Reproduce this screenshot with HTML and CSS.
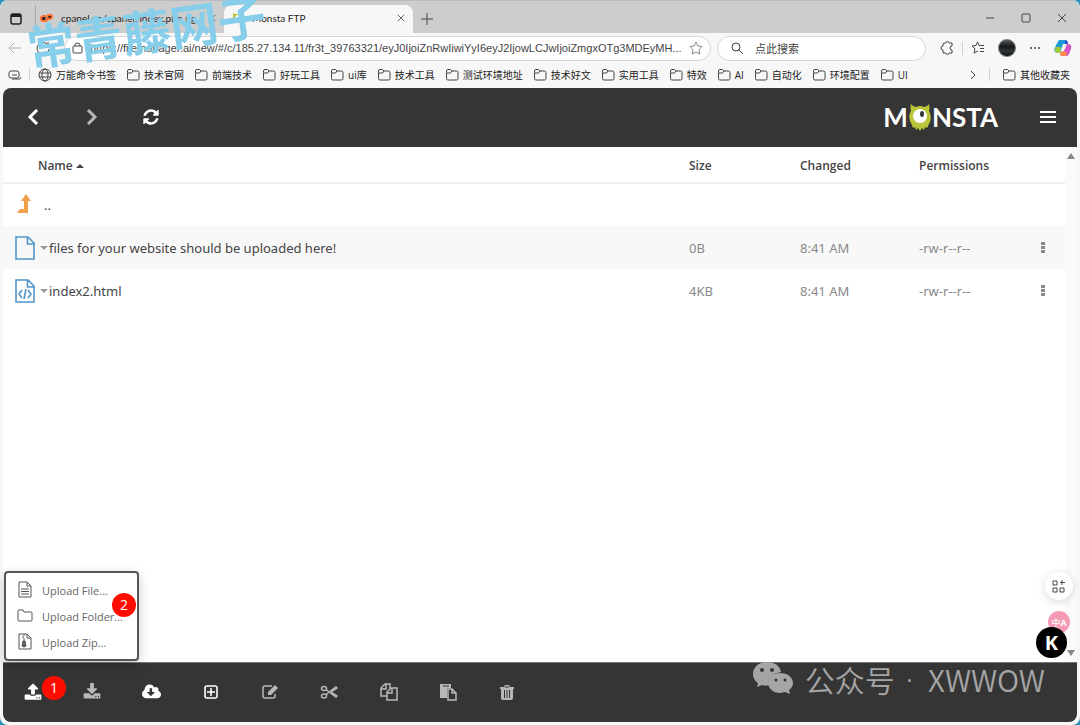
FILE: index.html
```html
<!DOCTYPE html>
<html lang="zh-CN">
<head>
  <meta charset="UTF-8">
  <title>Monsta FTP</title>
  <link rel="stylesheet" href="styles.css">
</head>
<body>
  <svg class="defs" aria-hidden="true">
    <symbol id="folder" viewBox="0 0 14 14"><path d="M1.500 4.500V3q0-1.500 1.500-1.500h2.500L7 3h4.500Q13 3 13 4.500v6q0 1.500-1.500 1.500H3q-1.500 0-1.500-1.500zM1.500 5h4L7 3"/></symbol>
    <symbol id="page" viewBox="0 0 20 24"><path d="M1 1h12l6 6v16H1zM12.500 1v7H19"/></symbol>
    <symbol id="close" viewBox="0 0 10 10"><path d="M1 1l8 8M9 1L1 9"/></symbol>
    <symbol id="dots" viewBox="0 0 4 12"><path d="M0 0h4v3H0zM0 4h4v3H0zM0 8h4v3H0z"/></symbol>
  </svg>

  <div class="window">
    <header class="titlebar">
      <button class="tab-menu" aria-label="Tab actions"><svg width="12" height="12" viewBox="0 0 12 12"><rect x="1" y="1" width="10" height="10" rx="2" fill="none" stroke="#222" stroke-width="1.500"/><path d="M1 1h10v3H1z" fill="#222"/></svg></button>
      <div class="tab">
        <svg width="13" height="10" viewBox="0 0 13 10" fill="none" stroke="#ff6c2c" stroke-width="2"><path d="M6 3H4Q1 3 1 5.500T4 8h1M6 9l2-7h2q2.500 0 2 2t-3 2H8"/></svg>
        <span class="tab-title">cpanel.cn/cpanel/index.php #g</span>
        <button aria-label="Close tab"><svg class="line" width="8" height="8"><use href="#close"/></svg></button>
      </div>
      <div class="tab active">
        <svg width="12" height="12" viewBox="0 0 12 12"><path d="M1 1l2 1h6l2-1v6q0 4-5 4T1 7z" fill="#b9c833"/><circle cx="6" cy="6" r="3" fill="#fff"/></svg>
        <span class="tab-title">Monsta FTP</span>
        <button aria-label="Close tab"><svg class="line" width="8" height="8"><use href="#close"/></svg></button>
      </div>
      <button class="new-tab" aria-label="New tab"><svg class="line" width="12" height="12" viewBox="0 0 12 12"><path d="M6 0v12M0 6h12"/></svg></button>
      <div class="window-controls">
        <button aria-label="Minimize"><svg class="line" width="10" height="10" viewBox="0 0 10 10"><path d="M1 5h8"/></svg></button>
        <button aria-label="Maximize"><svg class="line" width="10" height="10" viewBox="0 0 10 10"><rect x="1" y="1" width="8" height="8" rx="1"/></svg></button>
        <button aria-label="Close"><svg class="line" width="10" height="10"><use href="#close"/></svg></button>
      </div>
    </header>

    <div class="toolbar">
      <button class="faded" aria-label="Back"><svg class="line" width="14" height="12" viewBox="0 0 14 12"><path d="M13 6H1M6 1L1 6l5 5"/></svg></button>
      <button aria-label="Reload"><svg class="line" width="14" height="14" viewBox="0 0 14 14"><path d="M12 4a6 6 0 1 0 1 4M12 1v3H9"/></svg></button>
      <label class="address">
        <svg class="line" width="11" height="12" viewBox="0 0 11 12"><rect x="1" y="4" width="9" height="7" rx="1"/><path d="M3 4V3q0-2 2.500-2T8 3v1"/></svg>
        <input type="text" aria-label="Address" value="https://filemanager.ai/new/#/c/185.27.134.11/fr3t_39763321/eyJ0IjoiZnRwIiwiYyI6eyJ2IjowLCJwIjoiZmgxOTg3MDEyMH...">
        <svg class="line faint" width="14" height="14" viewBox="0 0 14 14"><path d="M7 1l2 4 4 .5-3 3 1 4.500-4-2-4 2 1-4.500-3-3L5 5z"/></svg>
      </label>
      <label class="search">
        <svg class="line" width="12" height="12" viewBox="0 0 12 12"><circle cx="5" cy="5" r="4"/><path d="M8 8l4 4"/></svg>
        <input type="text" aria-label="Search" value="点此搜索">
      </label>
      <div class="tools">
        <button aria-label="Extensions"><svg class="line" width="14" height="14" viewBox="0 0 14 14"><path d="M4 2h2q0-1.500 1.500-1.500T9 2h3v3q-2 0-2 2t2 2v3H9q0 1.500-1.500 1.500T6 12H3V9Q1 9 1 7t2-2V3z"/></svg></button>
        <i class="sep"></i>
        <button aria-label="Favorites"><svg class="line" width="14" height="14" viewBox="0 0 14 14"><path d="M7 10l-4 2 1-4-3-3 4-.5L6.500 1 8 4.500h5M9 7.500h4M9 10.500h4"/></svg></button>
        <button class="avatar" aria-label="Profile"></button>
        <button aria-label="More"><svg width="12" height="4" viewBox="0 0 12 4"><circle cx="2" cy="2" r="1"/><circle cx="6" cy="2" r="1"/><circle cx="10" cy="2" r="1"/></svg></button>
        <button aria-label="Copilot"><svg width="18" height="18" viewBox="0 0 18 18"><path d="M5 1h6l1 4H9L6 14H3q-4-1-2-6z" fill="#1c9ad6"/><path d="M1 8h6l-1 6H4Q0 14 1 8z" fill="#9ccb3b"/><path d="M11 1q3 0 3 4h-3z" fill="#2350c8"/><path d="M13 5h2q3 1 2 5l-2 5q-1 2-3 2H7l-1-3h3z" fill="#d356c5"/><path d="M8 12l5 1-1 4H8q-2 0-2-3z" fill="#fb8a4c"/></svg></button>
      </div>
    </div>

    <nav class="bookmarks">
      <button class="side" aria-label="Workspaces"><svg class="line" width="13" height="10" viewBox="0 0 13 10"><rect x="1" y="1" width="10" height="7" rx="2"/><path d="M4 5h5M4 9h7q2 0 2-2"/></svg></button>
      <i class="sep"></i>
      <a href="#"><svg class="line" width="14" height="14" viewBox="0 0 14 14"><circle cx="7" cy="7" r="6"/><ellipse cx="7" cy="7" rx="3" ry="6"/><path d="M1 5h12M1 9h12"/></svg>万能命令书签</a>
      <a href="#"><svg class="line" width="14" height="14"><use href="#folder"/></svg>技术官网</a>
      <a href="#"><svg class="line" width="14" height="14"><use href="#folder"/></svg>前端技术</a>
      <a href="#"><svg class="line" width="14" height="14"><use href="#folder"/></svg>好玩工具</a>
      <a href="#"><svg class="line" width="14" height="14"><use href="#folder"/></svg>ui库</a>
      <a href="#"><svg class="line" width="14" height="14"><use href="#folder"/></svg>技术工具</a>
      <a href="#"><svg class="line" width="14" height="14"><use href="#folder"/></svg>测试环境地址</a>
      <a href="#"><svg class="line" width="14" height="14"><use href="#folder"/></svg>技术好文</a>
      <a href="#"><svg class="line" width="14" height="14"><use href="#folder"/></svg>实用工具</a>
      <a href="#"><svg class="line" width="14" height="14"><use href="#folder"/></svg>特效</a>
      <a href="#"><svg class="line" width="14" height="14"><use href="#folder"/></svg>AI</a>
      <a href="#"><svg class="line" width="14" height="14"><use href="#folder"/></svg>自动化</a>
      <a href="#"><svg class="line" width="14" height="14"><use href="#folder"/></svg>环境配置</a>
      <a href="#"><svg class="line" width="14" height="14"><use href="#folder"/></svg>UI</a>
      <div class="overflow">
        <button aria-label="More bookmarks"><svg class="line" width="8" height="10" viewBox="0 0 8 10"><path d="M2 1l4 4-4 4"/></svg></button>
        <i class="sep"></i>
        <a href="#"><svg class="line" width="14" height="14"><use href="#folder"/></svg>其他收藏夹</a>
      </div>
    </nav>

    <main class="app">
      <header class="app-header">
        <button aria-label="Back"><svg width="16" height="16" viewBox="0 0 16 16"><path d="M12 1L5 8l7 7" fill="none" stroke="currentColor" stroke-width="3"/></svg></button>
        <button class="disabled" aria-label="Forward"><svg width="16" height="16" viewBox="0 0 16 16"><path d="M4 1l7 7-7 7" fill="none" stroke="currentColor" stroke-width="3"/></svg></button>
        <button aria-label="Refresh"><svg width="18" height="18" viewBox="0 0 1792 1792"><path d="M1639 1056q0 5-1 7-64 268-268 434.500t-478 166.500q-146 0-282.500-55t-243.500-157l-129 129q-19 19-45 19t-45-19-19-45v-448q0-26 19-45t45-19h448q26 0 45 19t19 45-19 45l-137 137q71 66 161 102t187 36q134 0 250-65t186-179q11-17 53-117 8-23 30-23h192q13 0 22.500 9.500t9.500 22.500zm25-800v448q0 26-19 45t-45 19h-448q-26 0-45-19t-19-45 19-45l138-138q-148-137-349-137-134 0-250 65t-186 179q-11 17-53 117-8 23-30 23h-199q-13 0-22.500-9.500t-9.500-22.500v-7q65-268 270-434.500t480-166.500q146 0 284 55.500t245 156.500l130-129q19-19 45-19t45 19 19 45z"/></svg></button>
        <a class="logo" href="#" aria-label="Monsta"><span>M</span><svg width="24" height="28" viewBox="0 0 24 28"><path d="M3 1q2 3 5 3 4-2 8 0 3 0 5-3 1 4 0 7 3 5 1 11l-2 4-1 2-2-1-1 3-2-2-2 3-2-3-2 2-1-3-2 1-1-3Q-1 14 3 8 2 4 3 1z" fill="#bac53a"/><circle cx="12" cy="13" r="7" fill="#fff"/><ellipse cx="14" cy="11" rx="2" ry="3" fill="#353535"/></svg><span>NSTA</span></a>
        <button class="menu" aria-label="Menu"><svg width="16" height="14" viewBox="0 0 16 14"><path d="M0 1h16v2H0zM0 6h16v2H0zM0 11h16v2H0z"/></svg></button>
      </header>

      <div class="files">
        <table>
          <colgroup><col><col class="size"><col class="changed"><col class="perms"><col class="actions"></colgroup>
          <thead>
            <tr><th class="name">Name <i class="caret up"></i></th><th>Size</th><th>Changed</th><th>Permissions</th><th></th></tr>
          </thead>
          <tbody>
            <tr>
              <td><div class="file parent"><svg width="20" height="22" viewBox="0 0 20 22"><path d="M11 0l5 7h-3v12H2l3-4h4V7H6z" fill="#f0a14a"/></svg><a href="#">..</a></div></td>
              <td></td><td></td><td></td><td></td>
            </tr>
            <tr>
              <td><div class="file"><svg class="doc" width="20" height="24"><use href="#page"/></svg><i class="caret"></i><a href="#">files for your website should be uploaded here!</a></div></td>
              <td>0B</td><td>8:41 AM</td><td>-rw-r--r--</td>
              <td><button aria-label="Actions"><svg width="4" height="12"><use href="#dots"/></svg></button></td>
            </tr>
            <tr>
              <td><div class="file"><svg class="doc" width="20" height="24" viewBox="0 0 20 24"><path d="M1 1h12l6 6v16H1zM12.500 1v7H19M7 11l-3 4 3 4M13 11l3 4-3 4M11 10l-2 10"/></svg><i class="caret"></i><a href="#">index2.html</a></div></td>
              <td>4KB</td><td>8:41 AM</td><td>-rw-r--r--</td>
              <td><button aria-label="Actions"><svg width="4" height="12"><use href="#dots"/></svg></button></td>
            </tr>
          </tbody>
        </table>
        <div class="scrollbar"><i class="arrow up"></i><i class="arrow"></i></div>
      </div>

      <footer class="app-footer">
        <div class="actions-bar">
          <button aria-label="Upload"><svg width="18" height="18" viewBox="0 0 1792 1792"><path d="M1344 1472q0-26-19-45t-45-19-45 19-19 45 19 45 45 19 45-19 19-45zm256 0q0-26-19-45t-45-19-45 19-19 45 19 45 45 19 45-19 19-45zm128-224v320q0 40-28 68t-68 28h-1472q-40 0-68-28t-28-68v-320q0-40 28-68t68-28h427q21 56 70.500 92t110.500 36h256q61 0 110.500-36t70.500-92h427q40 0 68 28t28 68zm-325-648q-17 40-59 40h-256v448q0 26-19 45t-45 19h-256q-26 0-45-19t-19-45v-448h-256q-42 0-59-40-17-39 14-69l448-448q18-19 45-19t45 19l448 448q31 30 14 69z"/></svg></button>
          <button class="disabled" aria-label="Download"><svg width="18" height="18" viewBox="0 0 1792 1792"><path d="M1344 1344q0-26-19-45t-45-19-45 19-19 45 19 45 45 19 45-19 19-45zm256 0q0-26-19-45t-45-19-45 19-19 45 19 45 45 19 45-19 19-45zm128-224v320q0 40-28 68t-68 28h-1472q-40 0-68-28t-28-68v-320q0-40 28-68t68-28h465l135 136q58 56 136 56t136-56l136-136h464q40 0 68 28t28 68zm-325-569q17 41-14 70l-448 448q-18 19-45 19t-45-19l-448-448q-31-29-14-70 17-39 59-39h256v-448q0-26 19-45t45-19h256q26 0 45 19t19 45v448h256q42 0 59 39z"/></svg></button>
          <button aria-label="Fetch file"><svg width="19" height="18" viewBox="-64 0 1920 1792"><path d="M1216 928q0-14-9-23t-23-9h-224v-352q0-13-9.500-22.500t-22.500-9.500h-192q-13 0-22.500 9.500t-9.500 22.500v352h-224q-13 0-22.500 9.500t-9.500 22.500q0 14 9 23l352 352q9 9 23 9t23-9l351-351q10-12 10-24zm640 224q0 159-112.500 271.500t-271.500 112.500h-1088q-185 0-316.500-131.500t-131.500-316.500q0-130 70-240t188-165q-2-30-2-43 0-212 150-362t362-150q156 0 285.500 87t188.500 231q71-62 166-62 106 0 181 75t75 181q0 76-41 138 130 31 213.500 135.500t83.500 238.500z"/></svg></button>
          <button aria-label="New"><svg width="16" height="16" viewBox="0 0 16 16"><g fill="none" stroke="currentColor" stroke-width="1.600"><rect x="2" y="2" width="12" height="12" rx="2"/><path d="M8 4v8M4 8h8"/></g></svg></button>
          <button class="disabled" aria-label="Edit"><svg width="18" height="16" viewBox="0 0 18 16"><path d="M11 2H4Q2 2 2 4v8q0 2 2 2h8q2 0 2-2v-2" fill="none" stroke="currentColor" stroke-width="1.500"/><path d="M7 8l7-7 3 3-7 7H7z"/></svg></button>
          <button class="disabled" aria-label="Cut"><svg width="18" height="16" viewBox="0 0 18 16"><g fill="none" stroke="currentColor" stroke-width="1.500"><ellipse cx="4" cy="4.500" rx="2.500" ry="2"/><ellipse cx="4" cy="12" rx="2.500" ry="2"/><path d="M6 5.500L9 8l7 5 1-1-6-4M6 11l3-3 7-5 1 1-6 4"/></g></svg></button>
          <button class="disabled" aria-label="Copy"><svg width="18" height="18" viewBox="0 0 18 18"><g fill="none" stroke="currentColor" stroke-width="1.500"><path d="M7 13H1V5l4-4h5v4M1 6h5V1"/><path d="M11 5h6v12H7V9zM7 10h5V5"/></g></svg></button>
          <button class="disabled" aria-label="Paste"><svg width="18" height="18" viewBox="0 0 18 18"><path d="M1 1h11v4H8v10H1z"/><path d="M4 3h6" stroke="#353535"/><path d="M9 6h4l4 4v7H9zM13 6v4h4" fill="none" stroke="currentColor" stroke-width="1.500"/></svg></button>
          <button class="disabled" aria-label="Delete"><svg width="14" height="16" viewBox="0 0 14 16"><path d="M0 3h4l1-2h4l1 2h4v2h-1v9q0 2-2 2H3q-2 0-2-2V5H0z"/><path d="M5 3h4M4.500 6v8M7 6v8M9.500 6v8" stroke="#353535"/></svg></button>
        </div>
        <span class="badge step-one">1</span>
      </footer>

      <div class="upload-menu">
        <button><svg width="16" height="18" viewBox="0 0 16 18"><path d="M2 1h8l4 4v11H2zM10 1v4h4M4 8h8M4 10.500h8M4 13h8"/></svg>Upload File...</button>
        <button><svg width="16" height="18" viewBox="0 0 16 18"><path d="M1 4q0-1 1-1h4l1 2h7q1 0 1 1v7q0 1-1 1H2q-1 0-1-1z"/></svg>Upload Folder...</button>
        <button><svg width="16" height="18" viewBox="0 0 16 18"><path d="M2 1h8l4 4v11H2zM10 1v4h4M6 2h2M5 4h2M6 6h2M7 7v3"/><path d="M5 13l1-5h2l1 5q-2 2-4 0z" fill="currentColor"/></svg>Upload Zip...</button>
        <span class="badge step-two">2</span>
      </div>

      <button class="float grid-tool" aria-label="Widgets"><svg class="line" width="14" height="14" viewBox="0 0 14 14"><path d="M1 2h4v4H1zM1 9h4v4H1zM8 9h4v4H8zM10 1v5M8 3.500h5"/></svg></button>
      <button class="float translate" aria-label="Translate"><span>中</span><b>A</b></button>
      <button class="float k-tool">K</button>

      <div class="account">
        <svg width="42" height="36" viewBox="0 0 42 36"><path d="M15 1C7 1 1 6 1 13q0 6 5 9l-1 4 5-2q4 1 7 0-2-11 12-13Q27 1 15 1z"/><path d="M28 12c-8 0-12 5-12 10s5 10 12 10l5-1 5 2-1-4q4-3 4-7c0-6-6-10-13-10z"/><g class="eyes"><circle cx="10" cy="9" r="2"/><circle cx="20" cy="9" r="2"/><circle cx="24" cy="19" r="1.500"/><circle cx="33" cy="19" r="1.500"/></g></svg>
        <span>公众号</span><span class="dot">·</span><span>XWWOW</span>
      </div>
    </main>
  </div>
  <div class="watermark">常青藤网子</div>
</body>
</html>
```

FILE: styles.css
```css
* {
  box-sizing: border-box;
}

body {
  margin: 0;
  background: #2596b8;
  font-family: "Open Sans", "Noto Sans CJK SC", sans-serif;
  color: #444;
  overflow: hidden;
}

button {
  display: flex;
  align-items: center;
  justify-content: center;
  padding: 0;
  border: 0;
  background: none;
  color: inherit;
  font: inherit;
  cursor: pointer;
}

a {
  color: inherit;
  text-decoration: none;
}

input {
  flex: 1;
  min-width: 0;
  padding: 0;
  border: 0;
  outline: 0;
  background: none;
  font: inherit;
  color: inherit;
}

svg {
  flex: none;
  fill: currentColor;
}

.defs {
  position: absolute;
  width: 0;
  height: 0;
}

.line {
  fill: none;
  stroke: #444;
}

.faint {
  stroke: #888;
}

.sep {
  width: 1px;
  height: 13px;
  background: #d0d0d0;
}

/* browser frame */
.window {
  display: flex;
  flex-direction: column;
  min-height: 100vh;
  border-radius: 8px;
  background: #f7f7f7;
  overflow: hidden;
}

.titlebar,
.toolbar,
.bookmarks {
  display: flex;
  align-items: center;
}

.titlebar {
  height: 33px;
  padding-top: 4px;
  background: #cdcdcd;
  border-top: 1px solid #b8bcc0;
  font-family: Lato, sans-serif;
  font-size: 10px;
  color: #222;
}

.tab-menu {
  width: 32px;
}

.tab {
  display: flex;
  align-items: center;
  gap: 8px;
  width: 189px;
  height: 28px;
  padding: 0 8px 2px;
  border-left: 1px solid #aaa;
  white-space: nowrap;
}

.tab.active {
  border: 0;
  border-radius: 8px 8px 0 0;
  background: #f7f7f7;
}

.tab-title {
  flex: 1;
}

.tab:first-of-type {
  padding-left: 4px;
  margin-left: 3px;
}

.new-tab {
  width: 28px;
}

.window-controls {
  display: flex;
  margin-left: auto;
  padding-bottom: 2px;
}

.window-controls button {
  width: 36px;
}

.toolbar {
  height: 30px;
  padding: 0 8px;
  font-family: "Liberation Sans", "Noto Sans CJK SC", sans-serif;
  font-size: 11px;
}

.toolbar > button {
  width: 28px;
  justify-content: flex-start;
}

.faded {
  opacity: 0.4;
}

.address,
.search {
  display: flex;
  align-items: center;
  height: 25px;
  border: 1px solid #d6d6d6;
  border-radius: 13px;
  background: #fff;
}

.address {
  flex: 1;
  gap: 7px;
  padding: 0 7px;
}

.search {
  width: 209px;
  margin: 0 6px;
  padding: 0 13px;
  gap: 12px;
}

.tools {
  display: flex;
  align-items: center;
  gap: 13px;
  margin-left: 8px;
}

.tools .sep {
  margin: 0 -5px;
}

.avatar {
  width: 18px;
  height: 18px;
  border: 1px solid #777;
  border-radius: 50%;
  background: linear-gradient(#555, #15191c 40%, #2e3335 70%, #111);
}

.bookmarks {
  gap: 10px;
  height: 25px;
  padding: 0 10px 2px 8px;
  font-size: 10px;
  white-space: nowrap;
  color: #222;
}

.bookmarks > .sep {
  margin: 0 -2px;
}

.bookmarks a {
  display: flex;
  align-items: center;
  gap: 4px;
}

.overflow {
  display: flex;
  align-items: center;
  gap: 12px;
  margin-left: auto;
}

/* file manager */
.app {
  position: relative;
  display: flex;
  flex: 1;
  flex-direction: column;
  margin: 0 3px 3px;
  border-radius: 8px;
  background: #fff;
}

.app-header,
.app-footer {
  display: flex;
  align-items: center;
  height: 59px;
  padding-bottom: 2px;
  background: #353535;
  color: #fff;
}

.app-header {
  border-radius: 8px 8px 0 0;
}

.app-header button {
  width: 59px;
}

.app-footer {
  position: relative;
  height: 60px;
  border-top: 1px solid #777;
  border-radius: 0 0 8px 8px;
}

.disabled {
  color: #b8b8b8;
}

.logo {
  display: flex;
  align-items: center;
  margin-left: auto;
  margin-right: 20px;
  font: 700 26px/28px Lato, sans-serif;
}

.files {
  display: flex;
  flex: 1;
}

table {
  flex: 1;
  align-self: flex-start;
  table-layout: fixed;
  border-collapse: collapse;
  font-family: "Noto Sans", sans-serif;
  font-size: 13px;
  color: #888;
}

.size {
  width: 111px;
}

.changed {
  width: 119px;
}

.perms {
  width: 103px;
}

.actions {
  width: 43px;
}

th,
td {
  height: 43px;
  padding: 0;
  text-align: left;
}

th {
  height: 36px;
  padding-top: 2px;
  border-bottom: 2px solid #eee;
  font-family: "Open Sans", sans-serif;
  font-size: 12px;
  font-weight: 600;
  color: #444;
}

th.name {
  padding-left: 35px;
}

tbody tr:nth-child(even) {
  background: #f8f8f8;
}

td button {
  width: 41px;
}

.file {
  display: flex;
  align-items: center;
  padding-left: 12px;
  color: #444;
}

.doc {
  fill: none;
  stroke: #5295c8;
  stroke-width: 1.6;
}

.parent a {
  padding-left: 9px;
}

.caret {
  display: inline-block;
  margin: 0 1px 0 5px;
  border: 4px solid transparent;
  border-top-color: #999;
  border-bottom: 0;
}

.caret.up {
  margin: 2px 0;
  border-top: 0;
  border-bottom: 4px solid #444;
}

.scrollbar {
  display: flex;
  flex-direction: column;
  align-items: center;
  justify-content: space-between;
  width: 12px;
  padding: 6px 0;
  background: #fafafa;
}

.arrow {
  border: 4px solid transparent;
  border-top: 6px solid #888;
  border-bottom: 0;
}

.arrow.up {
  border-top: 0;
  border-bottom: 6px solid #888;
}

.actions-bar {
  display: grid;
  grid-template-columns: repeat(9, 1fr);
  width: 50%;
  padding-right: 3px;
}

.badge {
  position: absolute;
  width: 24px;
  border-radius: 50%;
  background: #ff0d00;
  color: #fff;
  font-size: 14px;
  line-height: 24px;
  text-align: center;
}

.step-one {
  left: 39px;
  top: 13px;
}

.step-two {
  right: 1px;
  top: 20px;
}

.upload-menu {
  position: absolute;
  left: 1px;
  bottom: 61px;
  width: 135px;
  padding: 4px 0 4px 11px;
  border: 2px solid #555;
  border-radius: 4px;
  background: #fff;
  box-shadow: 0 4px 12px rgba(0, 0, 0, 0.2);
  color: #666;
  font-size: 11px;
}

.upload-menu button {
  gap: 9px;
  height: 26px;
  white-space: nowrap;
}

.upload-menu svg {
  fill: none;
  stroke: #555;
}

/* floating tools over the page */
.float {
  position: absolute;
  border-radius: 50%;
}

.grid-tool {
  right: 4px;
  bottom: 122px;
  width: 28px;
  height: 28px;
  background: #fff;
  box-shadow: 0 2px 8px rgba(0, 0, 0, 0.15);
}

.translate {
  right: 7px;
  bottom: 89px;
  width: 22px;
  height: 22px;
  background: #f49ab4;
  color: #fff;
  font-size: 9px;
}

.k-tool {
  right: 10px;
  bottom: 64px;
  width: 31px;
  height: 31px;
  background: #000;
  color: #fff;
  font-size: 20px;
  font-weight: 700;
}

.account {
  position: absolute;
  right: 32px;
  bottom: 20px;
  display: flex;
  align-items: center;
  gap: 11px;
  color: #a5a5a5;
  font: 350 30px/46px "Noto Sans CJK SC", sans-serif;
}

.dot {
  padding-right: 4px;
  font-family: "Noto Sans", sans-serif;
}

.eyes {
  fill: #353535;
}

.watermark {
  position: absolute;
  left: 26px;
  top: -1px;
  color: #87ceeb;
  font: 700 48px/60px "Noto Sans CJK SC", sans-serif;
  transform: rotate(-8deg);
}
```
